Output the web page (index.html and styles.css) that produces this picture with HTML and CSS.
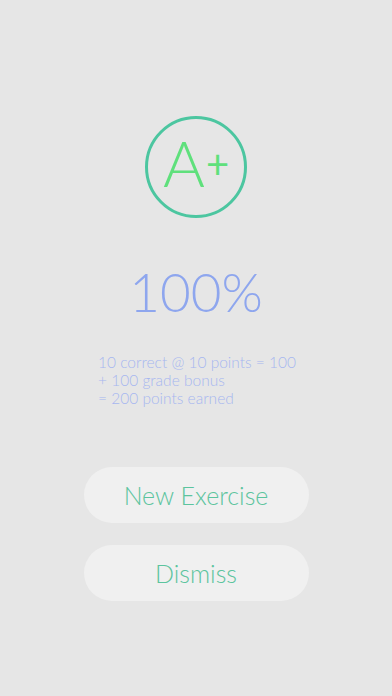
FILE: index.html
```html
<!DOCTYPE html>
<html>
<head>
<meta charset="utf-8">
<link rel="stylesheet" href="styles.css">
</head>
<body>
<main class="screen">
  <div class="grade">
    <span class="grade-letter">A</span><span class="grade-plus">+</span>
  </div>
  <div class="percent">100%</div>
  <div class="details">
    <div>10 correct @ 10 points = 100</div>
    <div>+ 100 grade bonus</div>
    <div>= 200 points earned</div>
  </div>
  <div class="actions">
    <button class="btn">New Exercise</button>
    <button class="btn">Dismiss</button>
  </div>
</main>
</body>
</html>
```

FILE: styles.css
```css
html, body {
  margin: 0;
  padding: 0;
  background: #e6e6e6;
}
.screen {
  width: 392px;
  height: 696px;
  display: flex;
  flex-direction: column;
  align-items: center;
  font-family: "Lato", "Open Sans", sans-serif;
  font-weight: 300;
}
.grade {
  margin-top: 116px;
  width: 96px;
  height: 96px;
  border: 3px solid #4cc6a0;
  border-radius: 50%;
  display: flex;
  align-items: center;
  justify-content: center;
  color: #5fe07c;
}
.grade-letter {
  font-size: 64px;
  line-height: 1;
  margin-top: -8px;
}
.grade-plus {
  font-size: 40px;
  font-weight: 400;
  line-height: 1;
  margin-top: -6px;
  margin-left: 1px;
}
.percent {
  margin-top: 42px;
  font-size: 53px;
  line-height: 64px;
  color: #8ea6ee;
}
.details {
  margin-top: 29px;
  align-self: flex-start;
  margin-left: 98px;
  font-size: 15.5px;
  line-height: 18px;
  color: #a6b7f0;
}
.actions {
  margin-top: 60px;
  display: flex;
  flex-direction: column;
  gap: 22px;
}
.btn {
  width: 225px;
  height: 56px;
  border: none;
  border-radius: 28px;
  background: #f0f0f0;
  color: #5cc49e;
  font-family: "Lato", "Open Sans", sans-serif;
  font-weight: 300;
  font-size: 25px;
  padding: 0;
}
```
